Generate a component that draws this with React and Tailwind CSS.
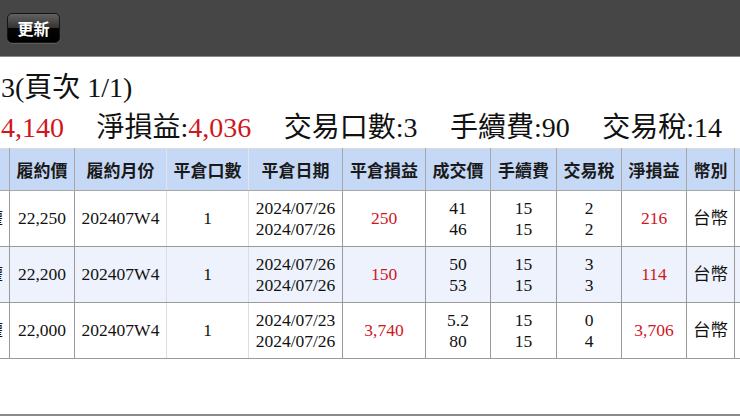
const serif = { fontFamily: '"Liberation Serif", "Noto Sans CJK TC", serif' };

const cols = [
  { w: 60, key: "x" },
  { w: 65, label: "履約價" },
  { w: 92, label: "履約月份", light: true },
  { w: 82, label: "平倉口數", light: true },
  { w: 94, label: "平倉日期" },
  { w: 83, label: "平倉損益" },
  { w: 65, label: "成交價" },
  { w: 66, label: "手續費" },
  { w: 65, label: "交易稅" },
  { w: 65, label: "淨損益" },
  { w: 48, label: "幣別" },
  { w: 60, label: "" },
];

const rows = [
  { bg: "bg-white", cells: ["買權", "22,250", "202407W4", "1", ["2024/07/26", "2024/07/26"], { red: "250" }, ["41", "46"], ["15", "15"], ["2", "2"], { red: "216" }, "台幣", ""] },
  { bg: "bg-[#edf2fc]", cells: ["買權", "22,200", "202407W4", "1", ["2024/07/26", "2024/07/26"], { red: "150" }, ["50", "53"], ["15", "15"], ["3", "3"], { red: "114" }, "台幣", ""] },
  { bg: "bg-white", cells: ["買權", "22,000", "202407W4", "1", ["2024/07/23", "2024/07/26"], { red: "3,740" }, ["5.2", "80"], ["15", "15"], ["0", "4"], { red: "3,706" }, "台幣", ""] },
];

function Cell({ v, i }) {
  const light = cols[i].light;
  const base =
    "border border-[#9a9a9a] p-0 text-center align-middle text-[17.5px] leading-[21px] text-[#111] " +
    (light ? "border-r-[#dedede] " : "") +
    (i === 0 ? "text-right pr-[6px] " : "");
  let content;
  if (Array.isArray(v)) {
    content = (
      <div className="flex flex-col items-center">
        <span>{v[0]}</span>
        <span>{v[1]}</span>
      </div>
    );
  } else if (v && typeof v === "object") {
    content = <span className="text-[#d0161e]">{v.red}</span>;
  } else {
    content = v;
  }
  return (
    <td className={base} style={serif}>
      {content}
    </td>
  );
}

export default function App() {
  return (
    <div className="w-[740px] h-[416px] flex flex-col bg-white overflow-hidden">
      <div className="h-[57px] shrink-0 bg-[#464646] border-b border-[#8a8a8a] pl-[7px] pt-[13px]">
        <button
          className="w-[53px] h-[30px] rounded-[5px] border border-[#151515] bg-[linear-gradient(#626262,#333333_50%,#050505_50%,#000000)] text-white text-[16px] font-bold leading-none flex items-center justify-center shadow-[0_1px_0_rgba(255,255,255,0.12)]"
          style={{ fontFamily: '"Noto Sans CJK TC", sans-serif' }}
        >
          更新
        </button>
      </div>

      <div className="mt-[11px] pl-[1px] text-[28px] leading-[40px] text-[#111] whitespace-nowrap" style={serif}>
        <div>3(頁次 1/1)</div>
        <div className="flex gap-[32.5px]">
          <span className="text-[#d0161e]">4,140</span>
          <span>
            淨損益:<span className="text-[#d0161e]">4,036</span>
          </span>
          <span>交易口數:3</span>
          <span>手續費:90</span>
          <span>交易稅:14</span>
        </div>
      </div>

      <div className="overflow-hidden shrink-0">
        <table className="table-fixed border-collapse ml-[-51px] w-[845px]">
          <colgroup>
            {cols.map((c, i) => (
              <col key={i} style={{ width: c.w }} />
            ))}
          </colgroup>
          <thead>
            <tr className="h-[42px] bg-[#c5d8f6]">
              {cols.map((c, i) => (
                <th
                  key={i}
                  className={
                    "border border-[#a8a8a8] border-t-[#dcdcdc] p-0 text-center text-[17px] font-bold text-[#1a1a1a] whitespace-nowrap " +
                    (c.light ? "border-r-[#e4e4e4]" : "")
                  }
                  style={{ fontFamily: '"Noto Sans CJK TC", sans-serif' }}
                >
                  {c.label}
                </th>
              ))}
            </tr>
          </thead>
          <tbody>
            {rows.map((r, ri) => (
              <tr key={ri} className={"h-[56px] " + r.bg}>
                {r.cells.map((v, i) => (
                  <Cell key={i} v={v} i={i} />
                ))}
              </tr>
            ))}
          </tbody>
        </table>
      </div>

      <div className="flex-1" />
      <div className="h-[2px] shrink-0 bg-[#8a8a8a]" />
    </div>
  );
}
